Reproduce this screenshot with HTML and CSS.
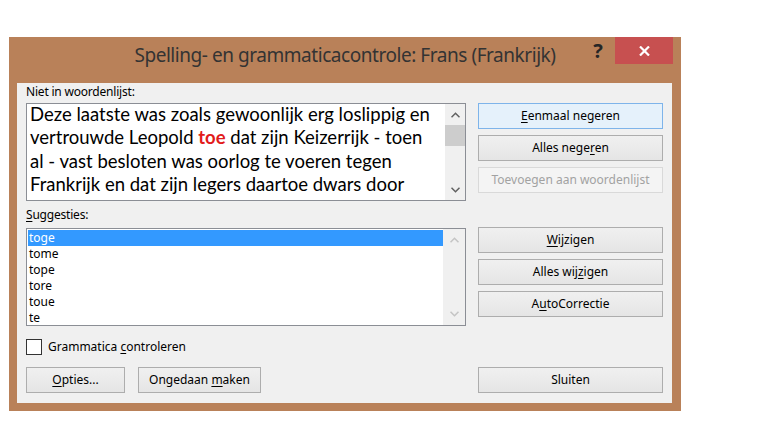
FILE: index.html
```html
<!DOCTYPE html>
<html lang="nl">
<head>
<meta charset="utf-8">
<title>Spelling- en grammaticacontrole</title>
<link rel="stylesheet" href="styles.css">
</head>
<body>
<div class="window">
  <div class="titlebar">
    <div></div>
    <div class="title">Spelling- en grammaticacontrole: Frans (Frankrijk)</div>
    <div class="controls">
      <span class="help">?</span>
      <span class="close"><svg width="11" height="10" viewBox="0 0 11 10"><path d="M1 0.5 L10 9.5 M10 0.5 L1 9.5" stroke="#fff" stroke-width="2.2" fill="none"/></svg></span>
    </div>
  </div>
  <div class="client">
    <div class="pane">
      <div class="col-left">
        <div class="label">Niet in woordenlijst:</div>
        <div class="textbox">
          <div class="text">Deze laatste was zoals gewoonlijk erg loslippig en<br>vertrouwde Leopold <b class="err">toe</b> dat zijn Keizerrijk - toen<br>al - vast besloten was oorlog te voeren tegen<br>Frankrijk en dat zijn legers daartoe dwars door</div>
          <div class="vscroll">
            <div class="arrow"><svg width="9" height="6" viewBox="0 0 9 6"><polyline points="0.5,5.2 4.5,1.2 8.5,5.2" fill="none" stroke="#606060" stroke-width="1.5"/></svg></div>
            <div class="thumb"></div>
            <div class="spacer"></div>
            <div class="arrow"><svg width="9" height="6" viewBox="0 0 9 6"><polyline points="0.5,0.8 4.5,4.8 8.5,0.8" fill="none" stroke="#606060" stroke-width="1.5"/></svg></div>
          </div>
        </div>
      </div>
      <div class="col-right first">
        <div class="btn default"><span><u>E</u>enmaal negeren</span></div>
        <div class="btn"><span>Alles nege<u>r</u>en</span></div>
        <div class="btn disabled"><span>Toevoegen aan woordenlijst</span></div>
      </div>
    </div>
    <div class="pane">
      <div class="col-left">
        <div class="label sugg"><u>S</u>uggesties:</div>
        <div class="listbox">
          <div class="items">
            <div class="item selected">toge</div>
            <div class="item">tome</div>
            <div class="item">tope</div>
            <div class="item">tore</div>
            <div class="item">toue</div>
            <div class="item">te</div>
          </div>
          <div class="vscroll light">
            <div class="arrow"><svg width="9" height="6" viewBox="0 0 9 6"><polyline points="0.5,5.2 4.5,1.2 8.5,5.2" fill="none" stroke="#c4c4c4" stroke-width="1.5"/></svg></div>
            <div class="spacer"></div>
            <div class="arrow"><svg width="9" height="6" viewBox="0 0 9 6"><polyline points="0.5,0.8 4.5,4.8 8.5,0.8" fill="none" stroke="#c4c4c4" stroke-width="1.5"/></svg></div>
          </div>
        </div>
      </div>
      <div class="col-right second">
        <div class="btn"><span><u>W</u>ijzigen</span></div>
        <div class="btn"><span>Alles wij<u>z</u>igen</span></div>
        <div class="btn"><span>A<u>u</u>toCorrectie</span></div>
      </div>
    </div>
    <div class="checkrow">
      <span class="checkbox"></span>
      <span class="checklabel">Grammatica <u>c</u>ontroleren</span>
    </div>
    <div class="bottomrow">
      <div class="btn opties"><span><u>O</u>pties...</span></div>
      <div class="btn ongedaan"><span>Ongedaan <u>m</u>aken</span></div>
      <div class="btn sluiten"><span>Sluiten</span></div>
    </div>
  </div>
</div>
</body>
</html>
```
FILE: styles.css
```css
* { box-sizing: border-box; }
body {
  margin: 0;
  background: #fff;
  font-family: "Noto Sans", "Open Sans", sans-serif;
  font-size: 12px;
  color: #000;
}
u { text-decoration: underline; text-underline-offset: 2px; }

.window {
  margin: 37px 0 0 9px;
  width: 672px;
  height: 374px;
  background: #b98159;
  display: flex;
  flex-direction: column;
}
.titlebar {
  height: 46px;
  flex: none;
  display: grid;
  grid-template-columns: 1fr auto 1fr;
  align-items: start;
}
.title {
  font-size: 19px;
  line-height: 28px;
  padding-top: 4px;
  color: #333;
  white-space: nowrap;
  letter-spacing: -0.45px;
}
.controls {
  justify-self: end;
  display: flex;
  align-items: flex-start;
  margin-right: 8px;
}
.help {
  width: 16px;
  margin-right: 9px;
  font-size: 20px;
  font-weight: bold;
  line-height: 28px;
  text-align: center;
  color: #262626;
}
.close {
  width: 58px;
  height: 27px;
  background: #c75050;
  display: flex;
  align-items: center;
  justify-content: center;
}

.client {
  flex: 1;
  margin: 0 9px 8px 8px;
  background: #f0f0f0;
  padding: 1px 9px 0 9px;
  display: flex;
  flex-direction: column;
}
.pane { display: flex; gap: 12px; }
.col-left { width: 440px; display: flex; flex-direction: column; }
.col-right { width: 185px; display: flex; flex-direction: column; gap: 6px; }
.col-right.first { padding-top: 19px; }
.col-right.second { padding-top: 26px; }

.label { line-height: 16px; margin-bottom: 3px; white-space: nowrap; letter-spacing: -0.2px; }
.label.sugg { margin-top: 6px; margin-bottom: 5px; }

.textbox {
  height: 98px;
  border: 1px solid #8b8e95;
  background: #fff;
  display: flex;
}
.text {
  flex: 1;
  overflow: hidden;
  white-space: nowrap;
  font-family: Lato, "Liberation Sans", sans-serif;
  font-size: 18.5px;
  line-height: 23.4px;
  padding-left: 3px;
  margin-top: -1px;
  color: #000;
}
.err { color: #e21b1b; font-weight: bold; }

.vscroll {
  width: 20px;
  background: #f0f0f0;
  display: flex;
  flex-direction: column;
}
.vscroll .arrow {
  height: 21px;
  display: flex;
  align-items: center;
  justify-content: center;
}
.vscroll .thumb { height: 21px; background: #cdcdcd; }
.vscroll .spacer { flex: 1; }
.vscroll.light { width: 22px; }
.vscroll.light .arrow { height: 22px; }

.listbox {
  height: 98px;
  border: 1px solid #8b8e95;
  background: #fff;
  display: flex;
}
.items { flex: 1; padding: 1px 0 0 1px; overflow: hidden; }
.item { height: 16px; line-height: 16px; padding-left: 1px; }
.item.selected { background: #3399ff; color: #fff; }

.checkrow {
  margin-top: 13px;
  height: 16px;
  display: flex;
  align-items: center;
  gap: 6px;
}
.checkbox {
  width: 16px;
  height: 16px;
  border: 1px solid #333;
  background: #fff;
}
.checklabel { line-height: 16px; }

.bottomrow { margin-top: 12px; display: flex; gap: 13px; }

.btn {
  height: 26px;
  border: 1px solid #adadad;
  background: linear-gradient(#f0f0f0, #e5e5e5);
  display: flex;
  align-items: center;
  justify-content: center;
  line-height: 16px;
  white-space: nowrap;
}
.btn.default { background: #e5f1fb; border-color: #7eb4ea; }
.btn.disabled { background: #f4f4f4; border-color: #d9d9d9; color: #a2a2a2; }
.btn.opties { width: 99px; }
.btn.ongedaan { width: 123px; }
.btn.sluiten { width: 185px; margin-left: auto; }
```
